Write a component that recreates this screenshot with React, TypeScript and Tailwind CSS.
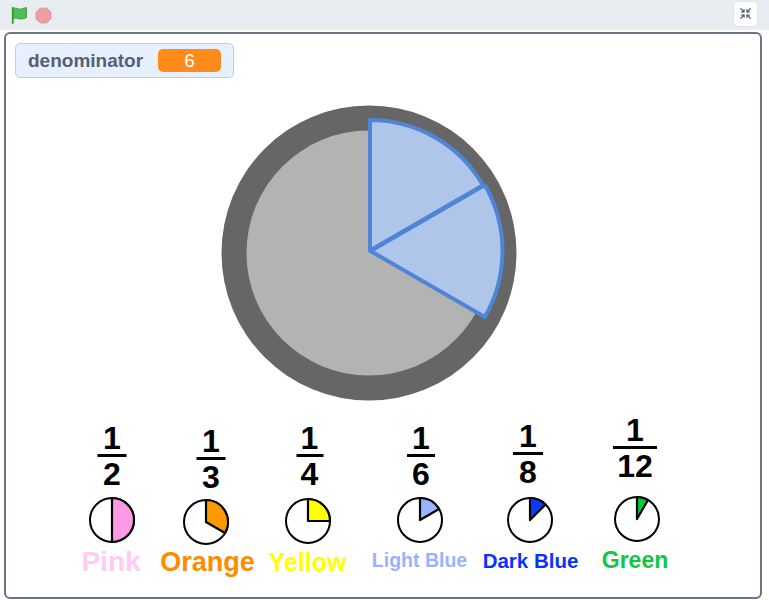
import React from 'react';

type Part = {
  denom: string;
  cx: number;
  top: number;
  barClass: string;
  pieCx: number;
  pieCy: number;
  fill: string;
  angle: number;
  label: string;
  labelX: number;
  labelTop: number;
  labelClass: string;
};

const PARTS: Part[] = [
  { denom: '2', cx: 112, top: 426, barClass: 'w-[29px]', pieCx: 111.5, pieCy: 520, fill: '#ff99e6', angle: 180, label: 'Pink', labelX: 111, labelTop: 548, labelClass: 'text-[28px] text-[#ffccf2]' },
  { denom: '3', cx: 211, top: 429, barClass: 'w-[29px]', pieCx: 205.5, pieCy: 522, fill: '#ff9900', angle: 120, label: 'Orange', labelX: 207.5, labelTop: 549, labelClass: 'text-[27px] text-[#ff8c00]' },
  { denom: '4', cx: 309.5, top: 426, barClass: 'w-[27px]', pieCx: 307.5, pieCy: 520.5, fill: '#ffff00', angle: 90, label: 'Yellow', labelX: 307.5, labelTop: 550, labelClass: 'text-[25px] text-[#ffff00]' },
  { denom: '6', cx: 421, top: 426, barClass: 'w-[28px]', pieCx: 420, pieCy: 520, fill: '#99b3ff', angle: 60, label: 'Light Blue', labelX: 419.5, labelTop: 551, labelClass: 'text-[19.5px] text-[#99b3ff]' },
  { denom: '8', cx: 528, top: 424, barClass: 'w-[30px]', pieCx: 529.5, pieCy: 520, fill: '#0a3cff', angle: 45, label: 'Dark Blue', labelX: 530.5, labelTop: 550.5, labelClass: 'text-[20.5px] text-[#0a32ff]' },
  { denom: '12', cx: 635, top: 418, barClass: 'w-[44px]', pieCx: 637, pieCy: 519, fill: '#00cc33', angle: 30, label: 'Green', labelX: 635, labelTop: 548.5, labelClass: 'text-[23px] text-[#10c83c]' },
];

// stage padding box starts at page (6, 34)
const SX = 6;
const SY = 34;

function sectorPath(cx: number, cy: number, r: number, from: number, to: number) {
  const rad = (a: number) => (a * Math.PI) / 180;
  const x1 = cx + r * Math.sin(rad(from));
  const y1 = cy - r * Math.cos(rad(from));
  const x2 = cx + r * Math.sin(rad(to));
  const y2 = cy - r * Math.cos(rad(to));
  const large = to - from > 180 ? 1 : 0;
  return `M${cx} ${cy} L${x1.toFixed(2)} ${y1.toFixed(2)} A${r} ${r} 0 ${large} 1 ${x2.toFixed(2)} ${y2.toFixed(2)} Z`;
}

const GreenFlag = () => (
  <svg width="18" height="18" viewBox="0 0 17 17">
    <path d="M3 2.3 C6 0.8 8 3.8 11 2.8 C12.5 2.3 14 1.8 15.5 1.5 L15.5 11 C13.5 12 11.5 12.3 10 12.3 C7.5 12.3 6 10.5 3 11.8 Z" fill="#4cbf56" stroke="#45993d" strokeWidth="0.9" strokeLinejoin="round" />
    <path d="M2.6 1.6 L2.6 16" stroke="#45993d" strokeWidth="1.8" strokeLinecap="round" />
  </svg>
);

const StopSign = () => (
  <svg width="17" height="17" viewBox="0 0 17 17">
    <polygon points="5.3,1 11.7,1 16,5.3 16,11.7 11.7,16 5.3,16 1,11.7 1,5.3" fill="#eca0a4" stroke="#dd8f94" strokeWidth="0.8" strokeLinejoin="round" />
  </svg>
);

const ExitFullscreen = () => (
  <svg width="13" height="13" viewBox="0 0 13 13" fill="#3e4a63">
    <path d="M1 1.8 L1.8 1 L4.6 3.8 L4.6 2.2 L5.6 2.2 L5.6 5.6 L2.2 5.6 L2.2 4.6 L3.8 4.6 Z" />
    <path d="M12 1.8 L11.2 1 L8.4 3.8 L8.4 2.2 L7.4 2.2 L7.4 5.6 L10.8 5.6 L10.8 4.6 L9.2 4.6 Z" />
    <path d="M1 11.2 L1.8 12 L4.6 9.2 L4.6 10.8 L5.6 10.8 L5.6 7.4 L2.2 7.4 L2.2 8.4 L3.8 8.4 Z" />
    <path d="M12 11.2 L11.2 12 L8.4 9.2 L8.4 10.8 L7.4 10.8 L7.4 7.4 L10.8 7.4 L10.8 8.4 L9.2 8.4 Z" />
  </svg>
);

const SmallPie = ({ fill, angle }: { fill: string; angle: number }) => (
  <svg width="50" height="50" viewBox="0 0 50 50">
    <circle cx="25" cy="25" r="22" fill="#ffffff" stroke="#000000" strokeWidth="2" />
    <path d={sectorPath(25, 25, 22, 0, angle)} fill={fill} stroke="#000000" strokeWidth="2.2" strokeLinejoin="round" />
  </svg>
);

const BigPie = () => (
  <svg width="300" height="300" viewBox="0 0 300 300">
    <circle cx="150" cy="150" r="147.5" fill="#666666" />
    <circle cx="150" cy="150" r="122.5" fill="#b3b3b3" />
    <path d={sectorPath(151.5, 148, 132, 60, 120)} fill="#afc5ea" stroke="#4f85d7" strokeWidth="4" strokeLinejoin="round" />
    <path d={sectorPath(151, 147.5, 130.5, 0, 60)} fill="#afc5ea" stroke="#4f85d7" strokeWidth="4" strokeLinejoin="round" />
  </svg>
);

export default function App() {
  return (
    <div className="w-[769px] h-[600px] bg-white overflow-hidden font-['Liberation_Sans',Arial,Helvetica,sans-serif]">
      <div className="h-[30px] bg-[#e8edf1] flex items-center justify-between pl-[10px] pr-[11px]">
        <div className="flex items-center gap-[7px]">
          <GreenFlag />
          <StopSign />
        </div>
        <button className="w-[25px] h-[26px] -mt-[3px] bg-white rounded-[5px] border border-[#dfe4ea] flex items-center justify-center">
          <ExitFullscreen />
        </button>
      </div>

      <div className="mt-[2px] ml-[4px] w-[758px] h-[567px] border-2 border-[#6e7488] rounded-[6px] relative bg-white">
        <div className="absolute left-[9px] top-[9px] w-[219px] h-[35px] bg-[#e6f0ff] border border-[#c3ccd9] rounded-[5px] flex items-center justify-between pl-[12px] pr-[12px]">
          <span className="text-[19px] font-bold text-[#575e75] leading-none">denominator</span>
          <span className="w-[63px] h-[23px] rounded-[5px] bg-[#ff8c1a] text-white text-[19px] leading-none flex items-center justify-center">6</span>
        </div>

        <div className="absolute left-[212.5px] top-[68.5px]">
          <BigPie />
        </div>

        {PARTS.map((p) => (
          <React.Fragment key={p.label}>
            <div
              className="absolute -translate-x-1/2 flex flex-col items-center text-black font-bold text-[32px] leading-[24px]"
              style={{ left: p.cx - SX, top: p.top - SY }}
            >
              <span>1</span>
              <span className={`${p.barClass} h-[3px] bg-black mt-[4px] mb-[5px]`} />
              <span>{p.denom}</span>
            </div>
            <div className="absolute" style={{ left: p.pieCx - 25 - SX, top: p.pieCy - 25 - SY }}>
              <SmallPie fill={p.fill} angle={p.angle} />
            </div>
            <div
              className={`absolute -translate-x-1/2 whitespace-nowrap font-bold leading-none ${p.labelClass}`}
              style={{ left: p.labelX - SX, top: p.labelTop - SY }}
            >
              {p.label}
            </div>
          </React.Fragment>
        ))}
      </div>
    </div>
  );
}
